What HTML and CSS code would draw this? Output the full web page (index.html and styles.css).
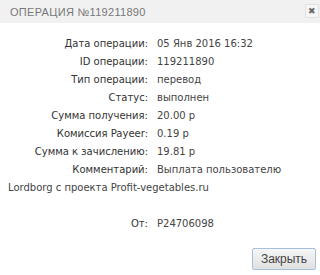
FILE: index.html
```html
<!DOCTYPE html>
<html lang="ru">
<head>
  <meta charset="UTF-8" />
  <title>Операция</title>
  <link rel="stylesheet" href="styles.css">
</head>
<body>
  <div class="dialog">
    <div class="dialog-head">
      <span class="dialog-title">Операция №119211890</span>
      <button class="dialog-close" type="button">&#10006;</button>
    </div>
    <div class="dialog-body">
      <div class="row"><span class="label">Дата операции:</span>05 Янв 2016 16:32</div>
      <div class="row"><span class="label">ID операции:</span>119211890</div>
      <div class="row"><span class="label">Тип операции:</span>перевод</div>
      <div class="row"><span class="label">Статус:</span>выполнен</div>
      <div class="row"><span class="label">Сумма получения:</span>20.00 р</div>
      <div class="row"><span class="label">Комиссия Payeer:</span>0.19 р</div>
      <div class="row"><span class="label">Сумма к зачислению:</span>19.81 р</div>
      <div class="row"><span class="label">Комментарий:</span>Выплата пользователю Lordborg с проекта Profit-vegetables.ru</div>
      <div class="row row-from"><span class="label">От:</span>P24706098</div>
    </div>
    <div class="dialog-foot">
      <button class="btn" type="button">Закрыть</button>
    </div>
  </div>
</body>
</html>
```

FILE: styles.css
```css
body {
  margin: 0;
  background: #fff;
  font-family: 'DejaVu Sans', sans-serif;
}

.dialog {
  width: 320px;
}

.dialog-head {
  display: flex;
  align-items: center;
  justify-content: space-between;
  height: 23px;
  padding: 0 1px 0 10px;
  background: #f1f1f1;
}

.dialog-title {
  font-family: 'Liberation Sans', Arial, sans-serif;
  font-size: 11px;
  letter-spacing: 0.3px;
  text-transform: uppercase;
  color: #777;
}

.dialog-close {
  width: 14px;
  height: 14px;
  padding: 0;
  margin-bottom: 2px;
  border: 1px solid #e2e2e2;
  background: #f6f6f6;
  color: #666;
  font-size: 9px;
  line-height: 12px;
}

.dialog-body {
  padding: 12px 8px 0;
  font-size: 10px;
  line-height: 18px;
  color: #444;
}

.row::after {
  content: "";
  display: block;
  clear: both;
}

.label {
  float: left;
  width: 140px;
  margin-right: 9px;
  text-align: right;
  color: #333;
}

.row-from {
  margin-top: 18px;
}

.dialog-foot {
  display: flex;
  justify-content: flex-end;
  padding: 15px 4px 0;
}

.btn {
  width: 64px;
  height: 22px;
  padding: 0;
  border: 1px solid #a9c0dc;
  border-radius: 2px;
  background: linear-gradient(#f6f6f6, #e0e0e0);
  color: #444;
  font-family: 'Liberation Sans', Arial, sans-serif;
  font-size: 12px;
}
```
